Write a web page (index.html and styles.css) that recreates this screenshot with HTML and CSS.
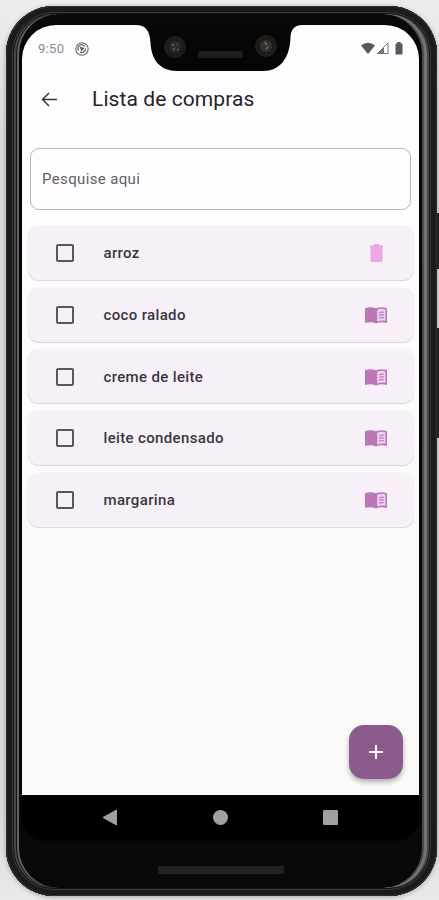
FILE: index.html
```html
<!DOCTYPE html>
<html lang="pt-BR">
<head>
    <meta charset="utf-8">
    <meta name="viewport" content="width=device-width, initial-scale=1">
    <title>Lista de compras</title>
    <link rel="stylesheet" href="styles.css">
</head>
<body>
    <!-- icons used more than once -->
    <svg class="defs" width="0" height="0">
        <symbol id="book" viewBox="0 0 22 18">
            <path d="M0 2.200C3.600.8 7.500.8 11 2.200 14.500.8 18.400.8 22 2.200V17C18.400 15.800 14.500 15.800 11 17.500 7.500 15.800 3.600 15.800 0 17Z" fill="#bd76b7"/>
            <path d="M12.200 3.800C14.700 2.600 17.800 2.600 20.400 3.500V14.900C17.800 14.200 14.700 14.400 12.200 15.500Z" fill="#ecd3eb"/>
            <path d="M14 6.800q2.400-1 4.900-.5M14 9.500q2.400-1 4.900-.5M14 12.200q2.400-1 4.900-.5" fill="none" stroke="#c78bc3" stroke-width="1.500"/>
        </symbol>
    </svg>

    <div class="side-button power"></div>
    <div class="side-button volume"></div>

    <div class="phone">
        <div class="screen">
            <!-- notch with cameras and speaker -->
            <svg class="notch" width="168" height="47" viewBox="0 0 168 47">
                <path d="M0 0H168V1H166C159 1 155 5 154.500 13C154 34 144 47 127 47H41C24 47 15.500 36 14.500 19C14 6 9 1 0 1Z" fill="#060606"/>
                <circle cx="39" cy="23" r="11" fill="#1d1c1a"/>
                <circle cx="39" cy="23" r="6" fill="#2b2825"/>
                <path d="M36 20l2 2M41 20l1 1M37 26l2-2M41 25l2 1" stroke="#706453" stroke-width="1.300"/>
                <circle cx="130" cy="22" r="11" fill="#1d1c1a"/>
                <circle cx="130" cy="22" r="6" fill="#35312e"/>
                <path d="M129 18l1.500 3M132 23l-2 2" stroke="#827461" stroke-width="1.400"/>
                <rect x="62" y="27" width="45" height="7" rx="2" fill="#1e1e1e"/>
            </svg>

            <div class="status-bar">
                <span class="clock">9:50</span>
                <svg class="app-dot" width="14" height="14" viewBox="0 0 14 14" fill="none" stroke="#68666b">
                    <circle cx="7" cy="7" r="6.200" stroke-width="1.100"/>
                    <path d="M3.500 8.500A3.800 3.800 0 0 1 10 4.500M10.500 6.500A3.700 3.700 0 0 1 5 10" stroke-width="1.300"/>
                    <path d="M4.500 4.500 9.500 6 6.500 9.500Z" fill="#5c5a5f" stroke="none"/>
                </svg>
                <div class="signals">
                    <svg width="43" height="13" viewBox="0 0 43 13" fill="#59575b">
                        <path d="M0 3.500Q7-2.200 14 3.500L7 12Z"/>
                        <path d="M27 1V11.500H16.500Z" fill="none" stroke="#77757a"/>
                        <path d="M16 12 23 5V12Z" fill="#77757a"/>
                        <path d="M34.500 1.500H36.300V0H39.700V1.500H41.500V12.500H34.500Z"/>
                    </svg>
                </div>
            </div>

            <div class="app-bar">
                <svg width="17" height="16" viewBox="0 0 17 16" fill="none" stroke="#39373b" stroke-width="1.500">
                    <path d="M16 8.500H2M8 2 1.500 8.500l6.500 6.500"/>
                </svg>
                <h1>Lista de compras</h1>
            </div>

            <div class="search">Pesquise aqui</div>

            <div class="list">
                <div class="item">
                    <span class="checkbox"></span>
                    <span class="name">arroz</span>
                    <svg class="icon" width="22" height="18" viewBox="0 0 22 18" fill="#eba8e3">
                        <path d="M5 1.500H8L9 0H14L15 1.500H18V3.500H5Z"/>
                        <path d="M5.500 3H17.500V16.500Q17.500 18 16 18H7Q5.500 18 5.500 16.500Z"/>
                    </svg>
                </div>
                <div class="item">
                    <span class="checkbox"></span>
                    <span class="name">coco ralado</span>
                    <svg class="icon" width="22" height="18"><use href="#book"/></svg>
                </div>
                <div class="item">
                    <span class="checkbox"></span>
                    <span class="name">creme de leite</span>
                    <svg class="icon" width="22" height="18"><use href="#book"/></svg>
                </div>
                <div class="item">
                    <span class="checkbox"></span>
                    <span class="name">leite condensado</span>
                    <svg class="icon" width="22" height="18"><use href="#book"/></svg>
                </div>
                <div class="item">
                    <span class="checkbox"></span>
                    <span class="name">margarina</span>
                    <svg class="icon" width="22" height="18"><use href="#book"/></svg>
                </div>
            </div>

            <div class="fab">
                <svg width="14" height="14" viewBox="0 0 14 14" stroke="#fff" stroke-width="2">
                    <path d="M7 0V14M0 7H14"/>
                </svg>
            </div>

            <div class="nav-bar">
                <svg width="16" height="17" viewBox="0 0 16 17"><path d="M1 8.500 14.500 1V16Z" fill="#a0a0a0" stroke="#a0a0a0" stroke-linejoin="round"/></svg>
                <span class="home"></span>
                <span class="recent"></span>
            </div>
        </div>
        <div class="speaker"></div>
    </div>
</body>
</html>
```

FILE: styles.css
```css
* {
    box-sizing: border-box;
}

body {
    margin: 0;
    height: 900px;
    padding: 6px 2px 0 6px;
    overflow: hidden;
    position: relative;
    background: linear-gradient(#ededed, #dadada 15%, #dadada 90%, #e9e9e9);
    font-family: Roboto, "Liberation Sans", sans-serif;
}

.defs {
    position: absolute;
}

/* phone body */
.phone {
    position: relative;
    height: 890px;
    padding: 19px 18px 0 16px;
    border-radius: 48px;
    background: #090909;
    box-shadow:
        inset 0 0 0 1px #303030,
        inset 0 0 0 6px #1b1b1b,
        inset 0 0 0 7px #3a3a3a,
        inset 0 0 0 8px #141414,
        inset 2px 0 0 8px #484848,
        inset 3px 0 0 8px #141414,
        inset 5px 0 0 8px #626262,
        inset -2px 0 0 8px #4a4a4a,
        inset -5px 0 0 8px #747474,
        inset -7px 0 0 8px #4a4a4a,
        0 1px 5px rgba(0, 0, 0, 0.3);
}

.side-button {
    position: absolute;
    right: 0;
    width: 6px;
    background: #242424;
}

.power {
    top: 213px;
    height: 56px;
}

.volume {
    top: 328px;
    height: 110px;
}

.speaker {
    width: 126px;
    height: 8px;
    margin: 26px auto 0;
    background: #222;
}

/* screen */
.screen {
    position: relative;
    display: flex;
    flex-direction: column;
    width: 397px;
    height: 815px;
    border-radius: 34px 34px 24px 24px;
    background: linear-gradient(#fefcff 25%, #fafafa 65%, #fafafa 95%, #000 95%);
    overflow: hidden;
    box-shadow: 0 0 0 2px #050505;
}

.notch {
    position: absolute;
    top: -1px;
    left: 114px;
}

.status-bar {
    display: flex;
    align-items: center;
    height: 47px;
    padding: 0 15px 0 16px;
}

.clock {
    width: 37px;
    font-size: 13px;
    letter-spacing: 0.3px;
    color: #8b898e;
}

.signals {
    display: flex;
    margin-left: auto;
}

.app-bar {
    display: flex;
    align-items: center;
    gap: 34px;
    height: 54px;
    padding-left: 19px;
}

.app-bar h1 {
    margin: 0;
    font-size: 21px;
    font-weight: 400;
    letter-spacing: 0.08px;
    color: #252327;
}

.search {
    display: flex;
    align-items: center;
    height: 62px;
    margin: 22px 8px 0;
    padding-left: 11px;
    border: 1px solid #b9b6bc;
    border-radius: 9px;
    font-size: 15px;
    letter-spacing: 0.36px;
    color: #626065;
}

/* shopping list */
.list {
    display: flex;
    flex-direction: column;
    gap: 7.7px;
    margin: 16px 5px 0 6px;
}

.item {
    display: flex;
    align-items: center;
    height: 54px;
    padding: 0.6px 27px 0 28px;
    border-radius: 11px;
    background: #f7f0f8;
    box-shadow: 0 1px 1px #d9d5da, 0 0 2px #f1edf2;
}

.checkbox {
    width: 18px;
    height: 18px;
    border: 2px solid #5a565e;
    border-radius: 2px;
}

.name {
    flex: 1;
    margin-left: 29.500px;
    font-size: 15px;
    font-weight: 500;
    letter-spacing: 0.35px;
    color: #3a373d;
}

.fab {
    display: flex;
    align-items: center;
    justify-content: center;
    width: 54px;
    height: 54px;
    margin: auto 16px 16px auto;
    border-radius: 15px;
    background: #8c5a8b;
    box-shadow: 0 3px 5px rgba(0, 0, 0, 0.3);
}

/* android navigation */
.nav-bar {
    display: flex;
    align-items: center;
    justify-content: space-between;
    height: 45px;
    padding: 0 81px 0 80px;
    background: #000;
}

.home {
    width: 15px;
    height: 15px;
    border-radius: 50%;
    background: #a0a0a0;
}

.recent {
    width: 15px;
    height: 15px;
    border-radius: 1px;
    background: #a0a0a0;
}
```
